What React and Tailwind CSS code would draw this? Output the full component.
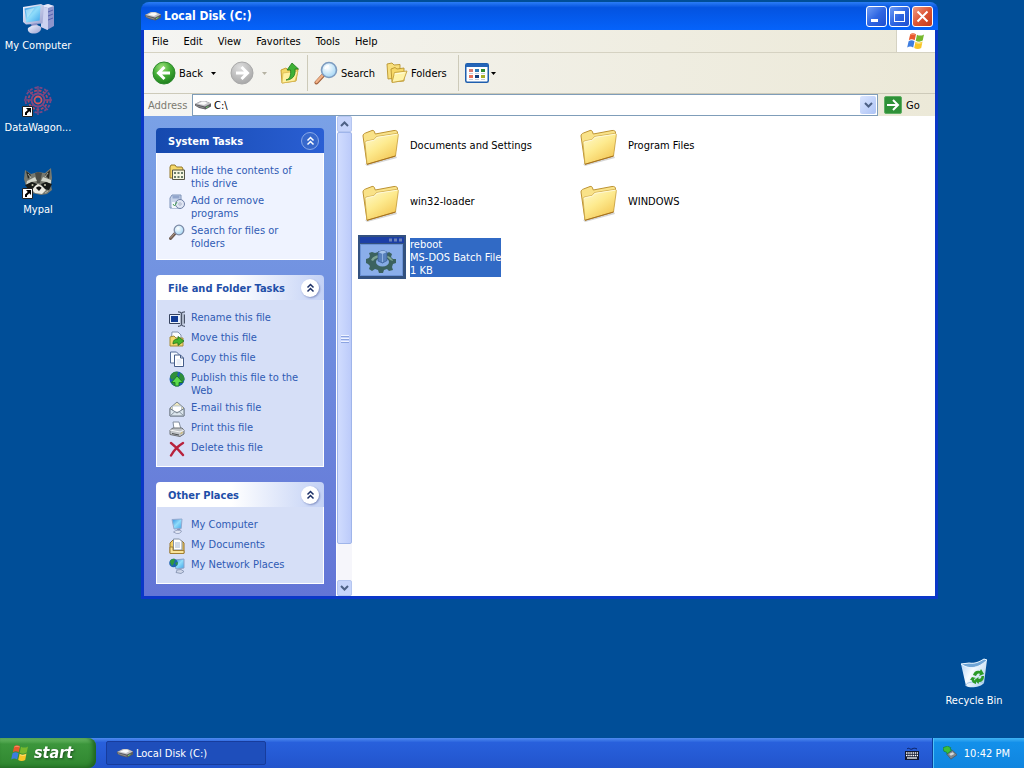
import React from "react";
import clsx from "clsx";

// gradients shared by every icon on the page
const Gradients = () => (
  <svg className="absolute" width="0" height="0" aria-hidden="true">
    <defs>
      <linearGradient id="folder" x1="0" y1="0" x2="0.7" y2="1">
        <stop offset="0" stopColor="#fffbd2" />
        <stop offset="0.5" stopColor="#fdea8e" />
        <stop offset="1" stopColor="#f3c552" />
      </linearGradient>
      <linearGradient id="screen" x1="0" y1="0" x2="1" y2="1">
        <stop offset="0" stopColor="#2f8fe0" />
        <stop offset="0.5" stopColor="#8fdcfa" />
        <stop offset="1" stopColor="#3fa4ea" />
      </linearGradient>
      <linearGradient id="plastic" x1="0" y1="0" x2="1" y2="1">
        <stop offset="0" stopColor="#f4f6ff" />
        <stop offset="1" stopColor="#98a0d0" />
      </linearGradient>
      <radialGradient id="greenBall" cx="0.4" cy="0.25" r="0.8">
        <stop offset="0" stopColor="#9fe27c" />
        <stop offset="0.5" stopColor="#43ad35" />
        <stop offset="1" stopColor="#1c7a1c" />
      </radialGradient>
      <radialGradient id="grayBall" cx="0.4" cy="0.25" r="0.8">
        <stop offset="0" stopColor="#dedede" />
        <stop offset="1" stopColor="#a5a5a5" />
      </radialGradient>
      <radialGradient id="lens" cx="0.4" cy="0.35" r="0.7">
        <stop offset="0" stopColor="#ffffff" />
        <stop offset="1" stopColor="#9fd4f4" />
      </radialGradient>
      <linearGradient id="bin" x1="0" y1="0" x2="1" y2="0.6">
        <stop offset="0" stopColor="#a9cdf3" />
        <stop offset="0.5" stopColor="#f6fbff" />
        <stop offset="1" stopColor="#b7d5ee" />
      </linearGradient>
    </defs>
  </svg>
);

const Icon = ({ size = 16, width, height, box = "0 0 16 16", children }) => (
  <svg
    className="block shrink-0"
    width={width || size}
    height={height || size}
    viewBox={box}
    fill="none"
    aria-hidden="true"
  >
    {children}
  </svg>
);

const DriveIcon = () => (
  <Icon>
    <path d="M0 7 6 4h4.500L16 6.500v3L10.500 12.500 4 11 0 8.500z" fill="#5c5c60" />
    <path d="M0 7 6 4h4.500L16 6.500 10 9.500z" fill="#c4c4c8" />
    <path d="M3 6.700 7 4.800h3l2.500 1.300L9 8z" fill="#fafafa" />
    <path d="M1 8.600l8.500 2.500" stroke="#98989c" strokeWidth=".8" />
    <path d="M11 10.800l2.500-1.500" stroke="#6fd06a" />
  </Icon>
);

const FlagIcon = ({ size }) => (
  <Icon size={size} box="0 0 20 20">
    <path d="M4.200 3.200C6 1.800 8 2 10 3.200L8.700 9.300C6.700 8 4.800 8 2.800 9.200z" fill="#e8582c" />
    <path d="M11 3.700C13 4.900 15.500 5 18 3.400L16.700 9.600C14.500 11 12 11 9.700 9.800z" fill="#77b82e" />
    <path d="M2.600 10.200C4.600 9 6.500 9 8.500 10.300L7.200 16.400C5.200 15.200 3.200 15.200 1.200 16.400z" fill="#3d7de0" />
    <path d="M9.500 10.800C11.800 12 14.200 12 16.500 10.600L15.200 16.900C12.800 18.300 10.500 18.200 8.200 16.900z" fill="#f8c528" />
    <path d="M4.500 4C6 3 8 3.200 9.500 4" stroke="#f8a07c" strokeWidth=".8" />
    <path d="M10 11.800c2 .9 4 .8 5.800 0" stroke="#fde78a" strokeWidth=".8" />
  </Icon>
);

const BackIcon = () => (
  <Icon size={24} box="0 0 24 24">
    <circle cx="12" cy="12" r="11" fill="url(#greenBall)" stroke="#2c8a2c" />
    <path d="M12.500 6 6.500 12l6 6M7 12h11" stroke="#fff" strokeWidth="3" />
  </Icon>
);

const ForwardIcon = () => (
  <Icon size={24} box="0 0 24 24">
    <circle cx="12" cy="12" r="11" fill="url(#grayBall)" stroke="#a9a9a9" />
    <path d="M11.500 6l6 6-6 6M17 12H6" stroke="#fff" strokeWidth="3" />
  </Icon>
);

const UpIcon = () => (
  <Icon size={22} box="0 0 22 22">
    <path d="M2 8l5-2 2 2 10-1-2 12-14 2z" fill="#f3d768" stroke="#c9a236" />
    <path d="M4 11l15-2-3 10-13 2z" fill="#fff1a0" stroke="#d7b549" strokeWidth=".7" />
    <path d="M7 18c4-1 5-5 4.500-10H8l5-7 6.500 6H16C17 14 13 18 7 18z" fill="#3fb135" stroke="#217a1d" strokeWidth=".8" />
  </Icon>
);

const SearchIcon = () => (
  <Icon size={24} box="0 0 24 24">
    <path d="M9 14.500 2.500 21.500" stroke="#a0603c" strokeWidth="4" strokeLinecap="round" />
    <path d="M8.500 14.500 2.500 21" stroke="#f2b287" strokeWidth="2.500" strokeLinecap="round" />
    <circle cx="15" cy="9" r="7.500" fill="url(#lens)" stroke="#7d9cc0" strokeWidth="1.600" />
    <path d="M11 8c.5-2 2-3.200 4-3.200" stroke="#fff" strokeWidth="1.500" />
  </Icon>
);

const FoldersIcon = () => (
  <Icon size={22} box="0 0 22 22">
    <path d="M1 2l5-1 2 2 6-.5v13L2 17z" fill="#f8df7c" stroke="#b8942f" strokeWidth=".9" />
    <path d="M5 7l4-1.500 2 1.500 7-1v13L6 20z" fill="#f6d867" stroke="#b8942f" strokeWidth=".9" />
    <path d="M8.500 10.500 21 9l-3.500 9.500L6 20.500z" fill="#fff3a8" stroke="#c5a03a" strokeWidth=".9" />
    <path d="M8.500 12l10-1.300" stroke="#fffce0" />
  </Icon>
);

const ViewsIcon = () => (
  <Icon width={24} height={20} box="0 0 24 20">
    <rect x=".75" y=".75" width="22.500" height="18.500" rx="1.500" fill="#fff" stroke="#1f5fae" strokeWidth="1.500" />
    <path d="M1 1h22v3H1z" fill="#2465b8" />
    <path d="M4 6h4v3H4z" fill="#d77d72" />
    <path d="M10 6h4v3h-4z" fill="#2f7db8" />
    <path d="M16 6h4v3h-4z" fill="#2f8a32" />
    <path d="M4 12h4v3H4z" fill="#e8735a" />
    <path d="M10 12h4v3h-4z" fill="#123f7c" />
    <path d="M16 12h4v3h-4z" fill="#a9ae25" />
    <path d="M4 10.500h4M10 10.500h4M16 10.500h4M4 16.500h4M10 16.500h4M16 16.500h4" stroke="#b9c2cf" strokeWidth=".8" />
  </Icon>
);

const GoIcon = () => (
  <Icon size={18} box="0 0 18 18">
    <rect x=".5" y=".5" width="17" height="17" rx="1.500" fill="#2f9138" stroke="#5fae63" />
    <path d="M3 9h11M9 4l5 5-5 5" stroke="#fff" strokeWidth="2" />
  </Icon>
);

const Caret = ({ color = "#000" }) => (
  <Icon width={5} height={3} box="0 0 5 3">
    <path d="M0 0h5L2.500 3z" fill={color} />
  </Icon>
);

const Chevron = ({ up }) => (
  <Icon width={9} height={6} box="0 0 9 6">
    <path d={up ? "M1 5l3.500-3.500L8 5" : "M1 1l3.500 3.500L8 1"} stroke="#4d6185" strokeWidth="2" />
  </Icon>
);

const BigFolderIcon = () => (
  <Icon size={48} box="0 -2 48 48">
    <path d="M7 41l31-8 1 2-30 8z" fill="#b9b9b9" opacity=".6" />
    <path d="M5 13c0-1.500 1-2.500 2.500-3L14 7.500c1.500-.4 2 .2 2.500 1.500l.8 2L36 7.500c2.500-.3 3.500.5 3.500 2.500L37 33 9 41z" fill="#f9e288" stroke="#bd9334" strokeWidth="1" />
    <path d="M7 20.500c0-1.500.6-2.300 2-2.600l7-1.300 2.500-3L38.500 10.500c1.500-.2 2 .4 1.800 1.800L37.500 33 9 41.300z" fill="url(#folder)" stroke="#c79f40" strokeWidth=".8" />
    <path d="M8 20c.1-.9.500-1.300 1.300-1.500l7-1.300 2.600-2.900 20.500-3.100" stroke="#fffbe0" strokeWidth=".9" />
    <path d="M9 41.300l28.500-8.300" stroke="#a56f1f" strokeWidth="1" />
  </Icon>
);

const BatchIcon = () => (
  <Icon size={48} box="0 0 48 48">
    <path d="M0 2h48v44H0z" fill="#33517f" />
    <path d="M2 4h44v6H2z" fill="#1c3fa6" />
    <path d="M31 5.500h3v3h-3zM36 5.500h3v3h-3zM41 5.500h3v3h-3z" fill="#6b83ba" />
    <path d="M2 11h43v32H2z" fill="#6c93d6" />
    <path d="M3 12h41v30H3z" fill="#8aaeea" />
    <path
      d="M20 18h4l1 3h3l3-2 3 2-1 3 2 2 3 0v4l-3 1-1 3 1 3-4 1-2-2-3 1-1 3h-4l-1-3-3-1-3 2-3-2 1-3-2-2-2-1v-4l3-1 1-2-1-3 3-1 3 1 3-1z"
      fill="#3b625f"
    />
    <path d="M13 27c2-4 6-5 11-5s10 2 11 6l-3-1c-2-3-5-3-8-3s-7 1-9 4z" fill="#7da395" />
    <ellipse cx="24.500" cy="29" rx="6.500" ry="4.500" fill="#86abe4" />
    <path d="M20 19l5-1.500 4 1.500v8.500L24.500 30 20 28z" fill="#5881bd" stroke="#35588f" strokeWidth=".7" />
    <path d="M20 19l5-1.500 4 1.500-4.500 2z" fill="#a5c3ec" />
    <path d="M24.500 21v8" stroke="#8eb0e0" />
  </Icon>
);

const ComputerIcon = () => (
  <Icon size={32} box="0 0 32 32">
    <path d="M19 3l7-2 6 2v20l-7 4-6-3z" fill="#8d95cc" />
    <path d="M19 3l7-2 6 2-6 2z" fill="#e5e8fa" />
    <path d="M19 3l7 2v22l-7-3z" fill="#cdd2f0" />
    <path d="M26 9l5-2M26 13l5-2M26 17l5-2" stroke="#5661ad" />
    <path d="M1 4 19 1l3 1.500-1.500 18L4 21.500 1 19z" fill="url(#plastic)" />
    <path d="M2.500 5.500 18.500 2.500l-.8 15-13.500 2z" fill="url(#screen)" />
    <path d="M3.500 7l9-2-7 10z" fill="#c5effc" opacity=".6" />
    <path d="M9 21l6-1 1 4-6 1z" fill="#8a91c7" />
    <path d="M6 25c3-3 10-4 13-1 1 3-2 6-6 6.500-5 .5-8-2-7-5.500z" fill="url(#plastic)" />
  </Icon>
);

const ShortcutArrow = () => (
  <>
    <path d="M.5 21.500h10v10H.5z" fill="#fff" stroke="#222" />
    <path d="M4 23h5v5l-1.700-1.700L5 28.500V30H3v-2.500L5.800 25z" fill="#000" />
  </>
);

const DataWagonIcon = () => (
  <Icon size={32} box="0 0 32 32">
    <g strokeWidth="1.800">
      <circle cx="16" cy="15" r="3.500" stroke="#d2545c" />
      <circle cx="16" cy="15" r="6.500" stroke="#85457f" />
      <circle cx="16" cy="15" r="9.500" stroke="#a34767" strokeDasharray="3 1.500" />
      <circle cx="16" cy="15" r="12.500" stroke="#7b4783" strokeDasharray="3 2" />
      <path d="M16 1v8M16 21v9M2 15h8M22 15h8M6 5l6 6M20 19l6 6M26 5l-6 6M12 19l-6 6" stroke="#7d4580" strokeWidth="1.300" />
    </g>
    <ShortcutArrow />
  </Icon>
);

const MypalIcon = () => (
  <Icon size={32} box="0 0 32 32">
    <path d="M3 3l6 4 7-2 7 1 6-5 1 10-1 7 1 5-5 4-6 1-9-2-6-7L2 12z" fill="#77796f" />
    <path d="M4 4l5 4-3 4zM28 3l-5 5 4 4z" fill="#262925" />
    <path d="M13 6l3-1 4 1-2 10h-3z" fill="#494b46" />
    <path d="M5 14l8-4 2 4-6 1-5 3zM29 13l-8-3-2 4 6 1 4 3z" fill="#d2d5ca" />
    <path d="M3 18l7-3 5 2-2 5-6 1zM30 17l-6-2-5 2 2 5 6 1z" fill="#171a18" />
    <path d="M13 19l3-2 4 2 4 4-4 4-7-1-3-3z" fill="#ecebe2" />
    <path d="M14 21c1-2 5-2 5.500 0L17 24z" fill="#111" />
    <circle cx="10.500" cy="18" r="1" fill="#c9c8b0" />
    <circle cx="23" cy="18" r="1" fill="#c9c8b0" />
    <path d="M6 7l3 4M26 6l-3 4M7 24l4 2M26 24l-3 2" stroke="#c7c8bc" strokeWidth=".8" />
    <ShortcutArrow />
  </Icon>
);

const RecycleIcon = () => (
  <Icon size={32} box="0 0 32 32">
    <path d="M3 6l8-1c6 1 10-1 15-4l3 1-3 23c-4 5-15 5-18 3z" fill="url(#bin)" />
    <path d="M3 6l8-1c6 1 10-1 15-4l3 1c-5 5-9 7-14 7C10 10 6 8 3 6z" fill="#6fa5d6" />
    <path d="M3 6l8-1c6 1 10-1 15-4l3 1M3 6c4 3 8 4 12 3.500C20 9 25 6 29 2" stroke="#e6f3ff" />
    <path d="M8 28c-.5-3 4-4 9-4s8 0 9 1" stroke="#9cc1e4" />
    <path d="M15 17c1-4 4-5 7-4l1-2 3 5-5 2 1-2c-2-1-3 0-4 2zM26 18c0 4-2 6-5 6l-.5 2-4-4 4-3v2c2 0 3-1 3-3zM14 19l4 1-2 1c0 1 1 2 2 2v3c-3-1-4-2-4.500-4L12 22z" fill="#2b9a28" />
  </Icon>
);

const HideContentsIcon = () => (
  <Icon>
    <path d="M1 3l1-2h4l1.500 2H13l1 2v9H1z" fill="#f6d869" stroke="#94782a" />
    <path d="M3.500 6h12v9.500h-12z" fill="#f5f5df" stroke="#585848" />
    <path d="M5 8h2v2H5zM8.500 8h2v2h-2zM12 8h2v2h-2zM5 12h2v2H5zM8.500 12h2v2h-2zM12 12h2v2h-2z" fill="#6a7d68" />
    <path d="M4 6.500h11" stroke="#a2a083" />
  </Icon>
);

const ProgramsIcon = () => (
  <Icon>
    <path d="M1 4l2-3h9v13H1z" fill="#c8d4ea" stroke="#7d92b8" />
    <path d="M3.500 1.500h7v3h-7z" fill="#93a6cc" />
    <path d="M3 8h5v6H3z" fill="#f4f7fc" />
    <circle cx="11" cy="10" r="4.500" fill="#e0e6f3" stroke="#6e7fa5" />
    <circle cx="11" cy="10" r="1.200" fill="#fff" stroke="#8894b5" strokeWidth=".7" />
    <path d="M4 10l1.500 2L8 8" stroke="#4ba25b" />
  </Icon>
);

const SmallSearchIcon = () => (
  <Icon>
    <path d="M6 9.500 1.500 14.500" stroke="#6b5a50" strokeWidth="3" strokeLinecap="round" />
    <path d="M5.500 9.500 1.500 14" stroke="#b79d8b" strokeLinecap="round" />
    <circle cx="10" cy="6" r="4.800" fill="url(#lens)" stroke="#7c8aa6" strokeWidth="1.300" />
  </Icon>
);

const RenameIcon = () => (
  <Icon>
    <path d="M.5 3.500h11v9H.5z" fill="#e9f1fc" stroke="#37435f" />
    <path d="M2 5h7v6H2z" fill="#123b95" />
    <path d="M11 2.500h4.500v11H11z" fill="#b9c2d4" />
    <path d="M9 .8c2 0 3 .5 3.500 1.500.5-1 1.500-1.500 3.500-1.500M12.500 2v12M9 15.300c2 0 3-.5 3.500-1.500.5 1 1.500 1.500 3.500 1.500M15.500 3.500v9" stroke="#4b5468" strokeWidth="1.200" />
  </Icon>
);

const MoveIcon = () => (
  <Icon>
    <path d="M3 1h6l3 3v9H2z" fill="#fbfdff" stroke="#8494ad" />
    <path d="M1 6l4-1 2 2h7v8H1z" fill="#f4d96d" stroke="#a48a3a" />
    <path d="M4 13c0-4 2-5 5-5V5.500L15 10l-6 4.500V12c-2 0-3 0-5 1z" fill="#45b52d" stroke="#256f1a" strokeWidth=".8" />
  </Icon>
);

const CopyIcon = () => (
  <Icon>
    <path d="M1.500 1h6L10 3.500V12H1.500z" fill="#f7fbff" stroke="#556d98" />
    <path d="M5.500 4h6L14.500 7v8.500h-9z" fill="#fff" stroke="#455d89" />
    <path d="M11.500 4v3h3" stroke="#455d89" />
    <path d="M7.500 9h5M7.500 11h5M7.500 13h5" stroke="#c6d5ec" strokeWidth=".8" />
  </Icon>
);

const PublishIcon = () => (
  <Icon>
    <circle cx="8" cy="8" r="7.500" fill="#1f5fae" />
    <path d="M1 6c1-4 4-6 8-5l-1 4-5 4zM11 2c3 1 5 4 4.500 7L12 12l-2-5zM2 11l4-2 1 5-2 1z" fill="#2f8f3a" />
    <path d="M2.500 11.500 8 5l6 6.500h-4V15H6v-3.500z" fill="#5ddb4c" stroke="#177521" strokeWidth=".9" />
  </Icon>
);

const MailIcon = () => (
  <Icon>
    <path d="M1 7l7-6 7 6v8H1z" fill="#efe8bf" stroke="#7b8592" />
    <path d="M3.500 5h9v6h-9z" fill="#fff" stroke="#a2b2c5" strokeWidth=".7" />
    <path d="M1 7.500l7 4.500 7-4.500V15H1z" fill="#dce6ed" stroke="#727d89" />
    <path d="M1 15l5-4.500M15 15l-5-4.500" stroke="#8b97a3" />
  </Icon>
);

const PrintIcon = () => (
  <Icon>
    <path d="M4 1h6l2 7H5z" fill="#fff" stroke="#8490a1" />
    <path d="M1 9l3-2h9l2 2v4l-4 2.500-10-2z" fill="#c1c4c8" stroke="#6d7074" />
    <path d="M1 9l10 2 4-2" stroke="#f5f5f5" />
    <path d="M3 12.500l7 1.500" stroke="#4c4f52" />
    <path d="M11.500 12.500l2-1" stroke="#d9b847" />
  </Icon>
);

const DeleteIcon = () => (
  <Icon>
    <path d="M2 2c4 3 8 7 12 12M14 2C9 5 5 9 2 14.500" stroke="#b8223c" strokeWidth="2.400" strokeLinecap="round" />
  </Icon>
);

const DocumentsIcon = () => (
  <Icon>
    <path d="M1 5l3-3 3 1h6l2 2v10H1z" fill="#f1cd63" stroke="#94702a" />
    <path d="M4.500 1h6L13 3.500V12H4.500z" fill="#fff" stroke="#8390a5" />
    <path d="M6 5h5M6 7h5M6 9h5" stroke="#8aa1c4" strokeWidth=".8" />
    <path d="M1 9h3v3.500h11v3H1z" fill="#fae49a" stroke="#a27f33" />
  </Icon>
);

const NetworkIcon = () => (
  <Icon>
    <path d="M5 2l10-1v9l-8 1z" fill="url(#screen)" stroke="#8ba1c8" />
    <path d="M8 12l4-.5 3 2-3 2-5-1z" fill="#ced6e9" stroke="#7381a0" strokeWidth=".7" />
    <circle cx="4.500" cy="5" r="4.300" fill="#1f65b0" />
    <path d="M1 4c0-2 3-4 5-3L5 5 3 8zM6 5l3-1-1 4z" fill="#2f9a3f" />
  </Icon>
);

const SmallComputerIcon = () => (
  <Icon>
    <path d="M3 1.500 13 1l-.8 9.500-7.200.5z" fill="url(#screen)" stroke="#93a9cf" />
    <path d="M8 11l3-.5.500 2-3 .5z" fill="#8793b7" />
    <path d="M4.500 14c2-2 6-2.500 8-1-.5 2-3 3-5 2.500z" fill="#dfe4f2" stroke="#7e8bac" strokeWidth=".7" />
  </Icon>
);

const KeyboardIcon = () => (
  <Icon width={14} height={13} box="0 0 14 13">
    <path d="M2 2c2-2 3 1 5 0s3-1 5 0" stroke="#0a1d5c" />
    <path d="M0 4h14v9H0z" fill="#10172f" />
    <path d="M1 6h12M1 8.500h12" stroke="#fff" strokeWidth="1.500" strokeDasharray="1.500 .7" />
    <path d="M2 11h10" stroke="#fff" strokeWidth="1.300" />
  </Icon>
);

const SafelyRemoveIcon = () => (
  <Icon size={14}>
    <path d="M4 9l7-4 5 5-7 5z" fill="#7f878d" stroke="#454b50" strokeWidth=".7" />
    <path d="M7 9l4-2 2 2-4 2z" fill="#d4d9db" />
    <path d="M0 2l5-2 4 2-1 1.500 2 1L5 9 4 7 1 6z" fill="#3bbf3b" stroke="#17751c" strokeWidth=".6" />
  </Icon>
);

const menus = ["File", "Edit", "View", "Favorites", "Tools", "Help"];

const panels = [
  {
    title: "System Tasks",
    primary: true,
    items: [
      { icon: HideContentsIcon, text: "Hide the contents of this drive" },
      { icon: ProgramsIcon, text: "Add or remove programs" },
      { icon: SmallSearchIcon, text: "Search for files or folders" },
    ],
  },
  {
    title: "File and Folder Tasks",
    items: [
      { icon: RenameIcon, text: "Rename this file" },
      { icon: MoveIcon, text: "Move this file" },
      { icon: CopyIcon, text: "Copy this file" },
      { icon: PublishIcon, text: "Publish this file to the Web" },
      { icon: MailIcon, text: "E-mail this file" },
      { icon: PrintIcon, text: "Print this file" },
      { icon: DeleteIcon, text: "Delete this file" },
    ],
  },
  {
    title: "Other Places",
    items: [
      { icon: SmallComputerIcon, text: "My Computer" },
      { icon: DocumentsIcon, text: "My Documents" },
      { icon: NetworkIcon, text: "My Network Places" },
    ],
  },
];

const files = [
  { icon: BigFolderIcon, lines: ["Documents and Settings"] },
  { icon: BigFolderIcon, lines: ["Program Files"] },
  { icon: BigFolderIcon, lines: ["win32-loader"] },
  { icon: BigFolderIcon, lines: ["WINDOWS"] },
  { icon: BatchIcon, lines: ["reboot", "MS-DOS Batch File", "1 KB"], selected: true },
];

const DesktopIcon = ({ icon: Picture, label }) => (
  <button className="flex w-[76px] flex-col items-center gap-1 whitespace-nowrap text-white">
    <Picture />
    <span>{label}</span>
  </button>
);

const TitleBar = () => (
  <header className="flex h-7 items-center justify-between rounded-t-lg bg-linear-to-b from-[#2b7df5] via-[#0453e0] via-20% to-[#0563fb] pr-[5px] pl-1">
    <h1 className="flex items-center gap-[3px] text-xs font-bold text-white">
      <DriveIcon />
      Local Disk (C:)
    </h1>
    <div className="flex gap-0.5">
      <button aria-label="Minimize" className="flex size-[21px] items-end rounded-[3px] border border-white bg-linear-to-br from-[#6f9cf5] via-[#2f66e2] to-[#1f4fd0] p-1">
        <span className="h-[3px] w-[7px] bg-white" />
      </button>
      <button aria-label="Maximize" className="flex size-[21px] items-center justify-center rounded-[3px] border border-white bg-linear-to-br from-[#6f9cf5] via-[#2f66e2] to-[#1f4fd0]">
        <span className="size-[11px] border border-t-[3px] border-white" />
      </button>
      <button aria-label="Close" className="flex size-[21px] items-center justify-center rounded-[3px] border border-white bg-linear-to-br from-[#f09a80] via-[#dc5434] to-[#c43a1c]">
        <Icon size={13} box="0 0 13 13">
          <path d="M1.500 1.500l10 10M11.500 1.500l-10 10" stroke="#fff" strokeWidth="2" />
        </Icon>
      </button>
    </div>
  </header>
);

const MenuBar = () => (
  <div className="flex h-[23px] border-b border-[#d5d2c2]">
    <nav className="flex flex-1 items-center gap-[15px] px-2">
      {menus.map((menu) => (
        <button key={menu}>{menu}</button>
      ))}
    </nav>
    <div className="flex w-[39px] items-center justify-center border-l border-[#d5d2c2] bg-white">
      <FlagIcon size={20} />
    </div>
  </div>
);

const Toolbar = () => (
  <div className="flex h-[41px] items-center border-b border-[#cdcab9] pl-2">
    <button className="flex items-center gap-[3px]">
      <BackIcon />
      Back
    </button>
    <button aria-label="Back history" className="px-2">
      <Caret />
    </button>
    <button aria-label="Forward" className="pl-1.5">
      <ForwardIcon />
    </button>
    <button aria-label="Forward history" className="px-2">
      <Caret color="#b5b2a3" />
    </button>
    <button aria-label="Up" className="px-1">
      <UpIcon />
    </button>
    <span className="mr-1 ml-0.5 h-9 w-px bg-[#cdcab9]" />
    <button className="flex items-center gap-[3px] pl-0.5">
      <SearchIcon />
      Search
    </button>
    <button className="flex items-center gap-[3px] pl-[11px]">
      <FoldersIcon />
      Folders
    </button>
    <span className="mr-1.5 ml-[11px] h-9 w-px bg-[#cdcab9]" />
    <button aria-label="Views" className="flex items-center gap-0.5">
      <ViewsIcon />
      <Caret />
    </button>
  </div>
);

const AddressBar = () => (
  <div className="flex h-[22px] items-center pl-1">
    <label htmlFor="address" className="w-11 text-[#7c7a70]">
      Address
    </label>
    <div className="flex h-full flex-1 items-center gap-[3px] border border-[#7f9db9] bg-white pr-px pl-0.5">
      <DriveIcon />
      <input id="address" defaultValue="C:\" className="min-w-0 flex-1 bg-transparent outline-none" />
      <button aria-label="Show addresses" className="flex h-[18px] w-4 items-center justify-center rounded-xs bg-linear-to-br from-[#dbe6ff] to-[#adc3f5]">
        <Chevron />
      </button>
    </div>
    <button className="flex w-[57px] items-center gap-1 pl-1.5">
      <GoIcon />
      Go
    </button>
  </div>
);

const TaskPanel = ({ title, primary, items }) => (
  <section>
    <h2
      className={clsx(
        "flex h-[25px] items-center justify-between rounded-t-[4px] pr-[5px] pl-3 font-bold",
        primary
          ? "bg-linear-to-r from-[#1549ae] to-[#2a5fd4] text-white"
          : "bg-linear-to-r from-white from-45% to-[#c3d1f5] text-[#1f4fa8]"
      )}
    >
      <span className="pt-0.5">{title}</span>
      <button
        aria-label={`Collapse ${title}`}
        className={clsx(
          "flex size-[18px] items-center justify-center rounded-full",
          primary
            ? "border border-[#88a8e8] bg-[#3768cc] text-white"
            : "bg-white text-[#1b2f66] shadow-[1px_1px_2px_#8493c4]"
        )}
      >
        <Icon width={9} height={10} box="0 0 9 10">
          <path d="M1.500 4.500l3-3 3 3M1.500 8.500l3-3 3 3" stroke="currentColor" strokeWidth="1.500" />
        </Icon>
      </button>
    </h2>
    <ul
      className={clsx(
        "flex flex-col gap-1 border border-t-0 border-white pt-[11px] pr-5 pb-[9px] pl-3",
        primary ? "bg-[#eff3ff]" : "bg-[#d6dff7]"
      )}
    >
      {items.map(({ icon: Picture, text }) => (
        <li key={text}>
          <a href="#" className="flex min-h-4 gap-1.5 text-[#2f5bb4]">
            <Picture />
            {text}
          </a>
        </li>
      ))}
    </ul>
  </section>
);

const ScrollBar = () => (
  <div className="flex w-[17px] flex-col border-x border-white bg-[#f6f6fb]">
    <button aria-label="Scroll up" className="flex h-4 items-center justify-center rounded-xs border border-[#b5c6f0] bg-[#c6d4fb]">
      <Chevron up />
    </button>
    <div className="mb-9 flex flex-1 flex-col items-center justify-center gap-0.5 rounded-xs border border-[#9fb5ea] bg-linear-to-r from-[#d0dcfe] to-[#bccbfa]">
      <span className="h-px w-2 bg-[#eef3ff] shadow-[0_1px_#8ca4e0]" />
      <span className="h-px w-2 bg-[#eef3ff] shadow-[0_1px_#8ca4e0]" />
      <span className="h-px w-2 bg-[#eef3ff] shadow-[0_1px_#8ca4e0]" />
    </div>
    <button aria-label="Scroll down" className="flex h-4 items-center justify-center rounded-xs border border-[#b5c6f0] bg-[#c6d4fb]">
      <Chevron />
    </button>
  </div>
);

const FileTile = ({ icon: Picture, lines, selected }) => (
  <button className="flex h-14 items-center gap-1 text-left">
    <Picture />
    <span className={clsx(selected && "bg-[#316ac5] text-white")}>
      {lines.map((line) => (
        <span key={line} className="block whitespace-nowrap">
          {line}
        </span>
      ))}
    </span>
  </button>
);

const ExplorerWindow = () => (
  <main className="absolute top-0.5 right-[86px] bottom-[139px] left-[141px] flex flex-col">
    <TitleBar />
    <div className="flex min-h-0 flex-1 flex-col border-x-3 border-b-3 border-[#0a37c8]">
      <div className="bg-linear-to-r from-[#f5f5f2] to-[#ece9d8]">
        <MenuBar />
        <Toolbar />
        <AddressBar />
      </div>
      <div className="flex min-h-0 flex-1 bg-white">
        <aside className="flex w-48 flex-col gap-[15px] bg-linear-to-b from-[#7aa1e6] to-[#6375d6] p-3">
          {panels.map((panel) => (
            <TaskPanel key={panel.title} {...panel} />
          ))}
        </aside>
        <ScrollBar />
        <div className="grid flex-1 auto-rows-min grid-cols-[repeat(auto-fill,218px)] pt-px pl-[5px]">
          {files.map((file) => (
            <FileTile key={file.lines[0]} {...file} />
          ))}
        </div>
      </div>
    </div>
  </main>
);

const Taskbar = () => (
  <footer className="flex h-[30px] items-stretch bg-linear-to-b from-[#4f8bf0] via-[#2860dc] via-15% to-[#2254cc] text-white">
    <button className="flex w-24 items-center gap-1 rounded-r-lg bg-linear-to-b from-[#6fbf6c] via-[#3c963c] via-20% to-[#2f862f] pl-2.5 text-base font-bold italic shadow-[inset_-3px_-1px_4px_#1f6420]">
      <FlagIcon size={20} />
      <span className="drop-shadow-[1px_1px_1px_#1d4d1d]">start</span>
    </button>
    <button className="my-[3px] ml-2.5 flex w-40 items-center gap-[3px] rounded-xs border border-[#173c9c] bg-[#1e4ebb] pl-2.5">
      <DriveIcon />
      Local Disk (C:)
    </button>
    <div className="mt-px ml-auto flex items-center pr-[13px]">
      <KeyboardIcon />
    </div>
    <div className="flex w-[92px] items-center justify-between border-l border-[#0b3f9c] bg-linear-to-b from-[#3fb4f5] via-[#1390ea] via-15% to-[#1085df] pr-3.5 pl-2.5 shadow-[inset_1px_0_#4fc3f8]">
      <SafelyRemoveIcon />
      <time>10:42 PM</time>
    </div>
  </footer>
);

const App = () => {
  return (
    <div className="flex h-screen flex-col overflow-hidden bg-[#004e98] font-['DejaVu_Sans_Condensed','DejaVu_Sans',sans-serif] text-[11px] leading-[13px] text-black">
      <Gradients />
      <div className="relative flex flex-1 items-start justify-between">
        <div className="flex flex-col gap-[33px] pt-[3px]">
          <DesktopIcon icon={ComputerIcon} label="My Computer" />
          <DesktopIcon icon={DataWagonIcon} label="DataWagon..." />
          <DesktopIcon icon={MypalIcon} label="Mypal" />
        </div>
        <div className="mr-3 mb-[31px] self-end">
          <DesktopIcon icon={RecycleIcon} label="Recycle Bin" />
        </div>
        <ExplorerWindow />
      </div>
      <Taskbar />
    </div>
  );
};

export default App;
